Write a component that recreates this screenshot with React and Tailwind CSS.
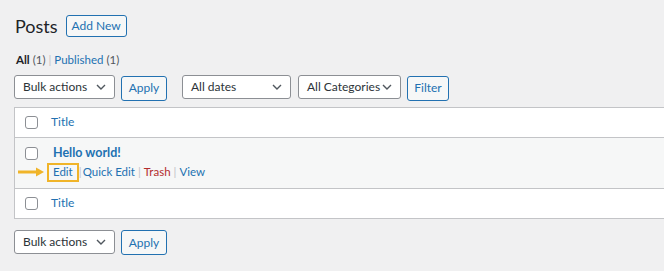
import React from 'react';

const font = { fontFamily: 'Lato, "Liberation Sans", sans-serif' };

const Chevron = () => (
  <svg width="10" height="6" viewBox="0 0 10 6" className="absolute right-[8px] top-1/2 -translate-y-1/2">
    <path d="M1 1l4 4 4-4" fill="none" stroke="#50575e" strokeWidth="1.4" />
  </svg>
);

const Select = ({ label, width }) => (
  <div
    className={`relative h-[24px] bg-white border border-[#8c8f94] rounded-[3px] flex items-center pl-[8px] text-[12px] text-[#2c3338] ${width}`}
  >
    {label}
    <Chevron />
  </div>
);

const Btn = ({ label, width }) => (
  <button
    className={`h-[25px] bg-[#f6f7f7] border border-[#2271b1] rounded-[3px] text-[12px] text-[#2271b1] ${width}`}
  >
    {label}
  </button>
);

const Check = () => (
  <span className="inline-block w-[13px] h-[13px] bg-white border border-[#8c8f94] rounded-[3px] shrink-0" />
);

const Sep = () => <span className="text-[#c3c4c7] mx-[3px]">|</span>;

export default function App() {
  return (
    <div className="w-[664px] h-[271px] bg-[#f0f0f1] overflow-hidden text-[#1d2327]" style={font}>
      {/* heading */}
      <div className="flex items-center pl-[15px] pt-[15px]">
        <h1 className="text-[18px] leading-[22px] text-[#1d2327]">Posts</h1>
        <button className="ml-[8px] h-[22px] w-[61px] bg-[#f6f7f7] border border-[#2271b1] rounded-[3px] text-[12px] text-[#2271b1]">
          Add New
        </button>
      </div>

      {/* views */}
      <div className="pl-[16px] mt-[15px] text-[11.5px] leading-[16px]">
        <span className="font-bold text-[#1d2327]">All</span>{' '}
        <span className="text-[#50575e]">(1)</span>
        <Sep />
        <span className="text-[#2271b1]">Published</span>{' '}
        <span className="text-[#50575e]">(1)</span>
      </div>

      {/* top filters */}
      <div className="flex items-center pl-[14px] mt-[6px]">
        <Select label="Bulk actions" width="w-[101px]" />
        <div className="ml-[6px]"><Btn label="Apply" width="w-[46px]" /></div>
        <div className="ml-[15px]"><Select label="All dates" width="w-[109px]" /></div>
        <div className="ml-[7px]"><Select label="All Categories" width="w-[103px]" /></div>
        <div className="ml-[6px]"><Btn label="Filter" width="w-[42px]" /></div>
      </div>

      {/* table */}
      <div className="ml-[14px] mt-[6px] w-[700px] border border-[#c3c4c7] bg-white text-[12px]">
        <div className="h-[30px] flex items-center pl-[10px] border-b border-[#c3c4c7]">
          <Check />
          <span className="ml-[13px] text-[#2271b1]">Title</span>
        </div>
        <div className="h-[51px] pt-[7px] bg-[#f6f7f7] border-b border-[#c3c4c7] relative">
          <div className="flex items-center h-[18px] pl-[10px]">
            <Check />
            <span className="ml-[15px] font-bold text-[#2271b1] text-[12.5px]">Hello world!</span>
          </div>
          <div className="flex items-center pl-[32px] text-[11.5px]">
            <span className="relative">
              <svg width="32" height="14" viewBox="0 0 32 14" className="absolute left-[-31px] top-[2px] overflow-visible">
                <defs>
                  <filter id="sh" x="-20%" y="-50%" width="140%" height="250%">
                    <feGaussianBlur stdDeviation="1.6" />
                  </filter>
                </defs>
                <path d="M3 10h22" stroke="#8c8f94" strokeWidth="3" opacity="0.6" filter="url(#sh)" />
                <path d="M2 7h20" stroke="#f0b429" strokeWidth="3" />
                <path d="M20 2.5l8 4.5-8 4.5z" fill="#f0b429" />
              </svg>
              <span className="inline-flex items-center h-[19px] px-[4px] border-2 border-[#f0b429] text-[#2271b1]">Edit</span>
            </span>
            <span className="text-[#c3c4c7] mr-[1px]">|</span>
            <span className="text-[#2271b1]">Quick Edit</span>
            <Sep />
            <span className="text-[#b32d2e]">Trash</span>
            <Sep />
            <span className="text-[#2271b1]">View</span>
          </div>
        </div>
        <div className="h-[29px] flex items-center pl-[10px]">
          <Check />
          <span className="ml-[13px] text-[#2271b1]">Title</span>
        </div>
      </div>

      {/* bottom bulk */}
      <div className="flex items-center pl-[14px] mt-[10px]">
        <Select label="Bulk actions" width="w-[101px]" />
        <div className="ml-[6px]"><Btn label="Apply" width="w-[46px]" /></div>
      </div>
    </div>
  );
}
